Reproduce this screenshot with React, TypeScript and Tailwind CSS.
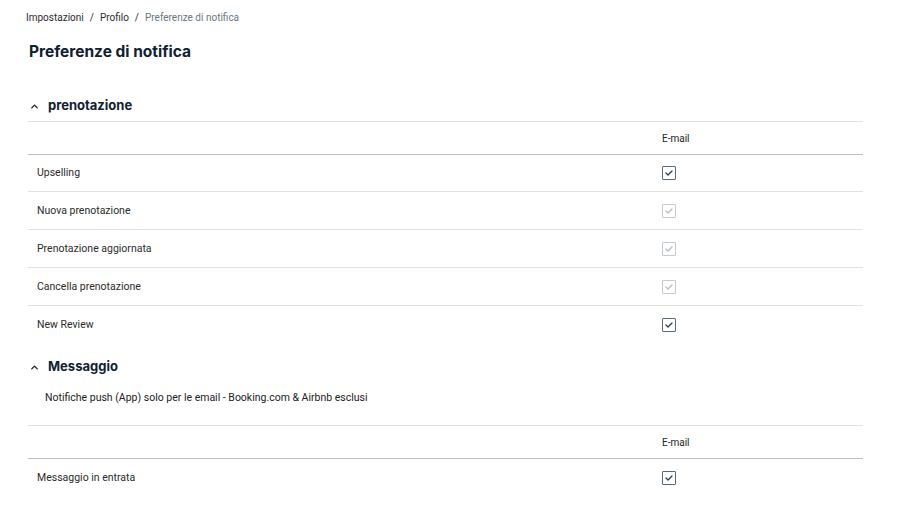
import { ChevronUp } from "lucide-react";

type Row = { label: string; checked: boolean; disabled?: boolean };

const bookingRows: Row[] = [
  { label: "Upselling", checked: true },
  { label: "Nuova prenotazione", checked: true, disabled: true },
  { label: "Prenotazione aggiornata", checked: true, disabled: true },
  { label: "Cancella prenotazione", checked: true, disabled: true },
  { label: "New Review", checked: true },
];

const messageRows: Row[] = [{ label: "Messaggio in entrata", checked: true }];

function Checkbox({ checked, disabled }: { checked: boolean; disabled?: boolean }) {
  return (
    <span
      className={`flex h-[14px] w-[14px] items-center justify-center rounded-[1px] border ${
        disabled ? "border-[#c3cbd0]" : "border-[#566d79]"
      }`}
    >
      {checked && (
        <svg width="8" height="6" viewBox="0 0 8 6" fill="none">
          <path
            d="M1 3l2 2 4-4"
            stroke={disabled ? "#b5bdc2" : "#2f3f4a"}
            strokeWidth="1.3"
            strokeLinecap="round"
            strokeLinejoin="round"
          />
        </svg>
      )}
    </span>
  );
}

function Table({ rows }: { rows: Row[] }) {
  return (
    <div className="w-[835px] border-t border-[#e2e2e2]">
      <div className="flex h-[33px] items-center border-b border-[#bdbdbd]">
        <div className="flex-1" />
        <div className="w-[201px] text-[10px] text-[#222]">E-mail</div>
      </div>
      {rows.map((r, i) => (
        <div
          key={r.label}
          className={`flex items-center ${i === 0 ? "h-[37px]" : "h-[38px]"} ${
            i < rows.length - 1 ? "border-b border-[#e2e2e2]" : ""
          }`}
        >
          <div className="flex-1 pl-[9px] text-[10.5px] text-[#2b2b2b]">{r.label}</div>
          <div className="w-[201px]">
            <Checkbox checked={r.checked} disabled={r.disabled} />
          </div>
        </div>
      ))}
    </div>
  );
}

function SectionTitle({ children }: { children: string }) {
  return (
    <div className="flex h-[20px] items-center">
      <ChevronUp size={11} strokeWidth={3} className="ml-[1px] text-[#0f2130]" />
      <span className="ml-[8px] font-['Inter',sans-serif] text-[13px] font-bold text-[#0f2130]">
        {children}
      </span>
    </div>
  );
}

export default function App() {
  return (
    <div className="min-h-[508px] bg-white px-[28px] pt-[9px] font-['Roboto',sans-serif]">
      <div className="ml-[-2px] flex h-[16px] items-center gap-[6px] text-[10px] text-[#2b2b2b]">
        <span>Impostazioni</span>
        <span>/</span>
        <span>Profilo</span>
        <span>/</span>
        <span className="text-[#6b7780]">Preferenze di notifica</span>
      </div>
      <h1 className="ml-[1px] mt-[17px] h-[20px] font-['Inter',sans-serif] text-[15.5px] font-bold leading-[20px] text-[#0f2130]">
        Preferenze di notifica
      </h1>

      <div className="mt-[34px]">
        <SectionTitle>prenotazione</SectionTitle>
      </div>
      <div className="mt-[5px]">
        <Table rows={bookingRows} />
      </div>

      <div className="mt-[13px]">
        <SectionTitle>Messaggio</SectionTitle>
      </div>
      <div className="ml-[17px] mt-[14px] h-[14px] text-[10.5px] leading-[14px] text-[#222]">
        Notifiche push (App) solo per le email - Booking.com &amp; Airbnb esclusi
      </div>
      <div className="mt-[20px]">
        <Table rows={messageRows} />
      </div>
    </div>
  );
}
